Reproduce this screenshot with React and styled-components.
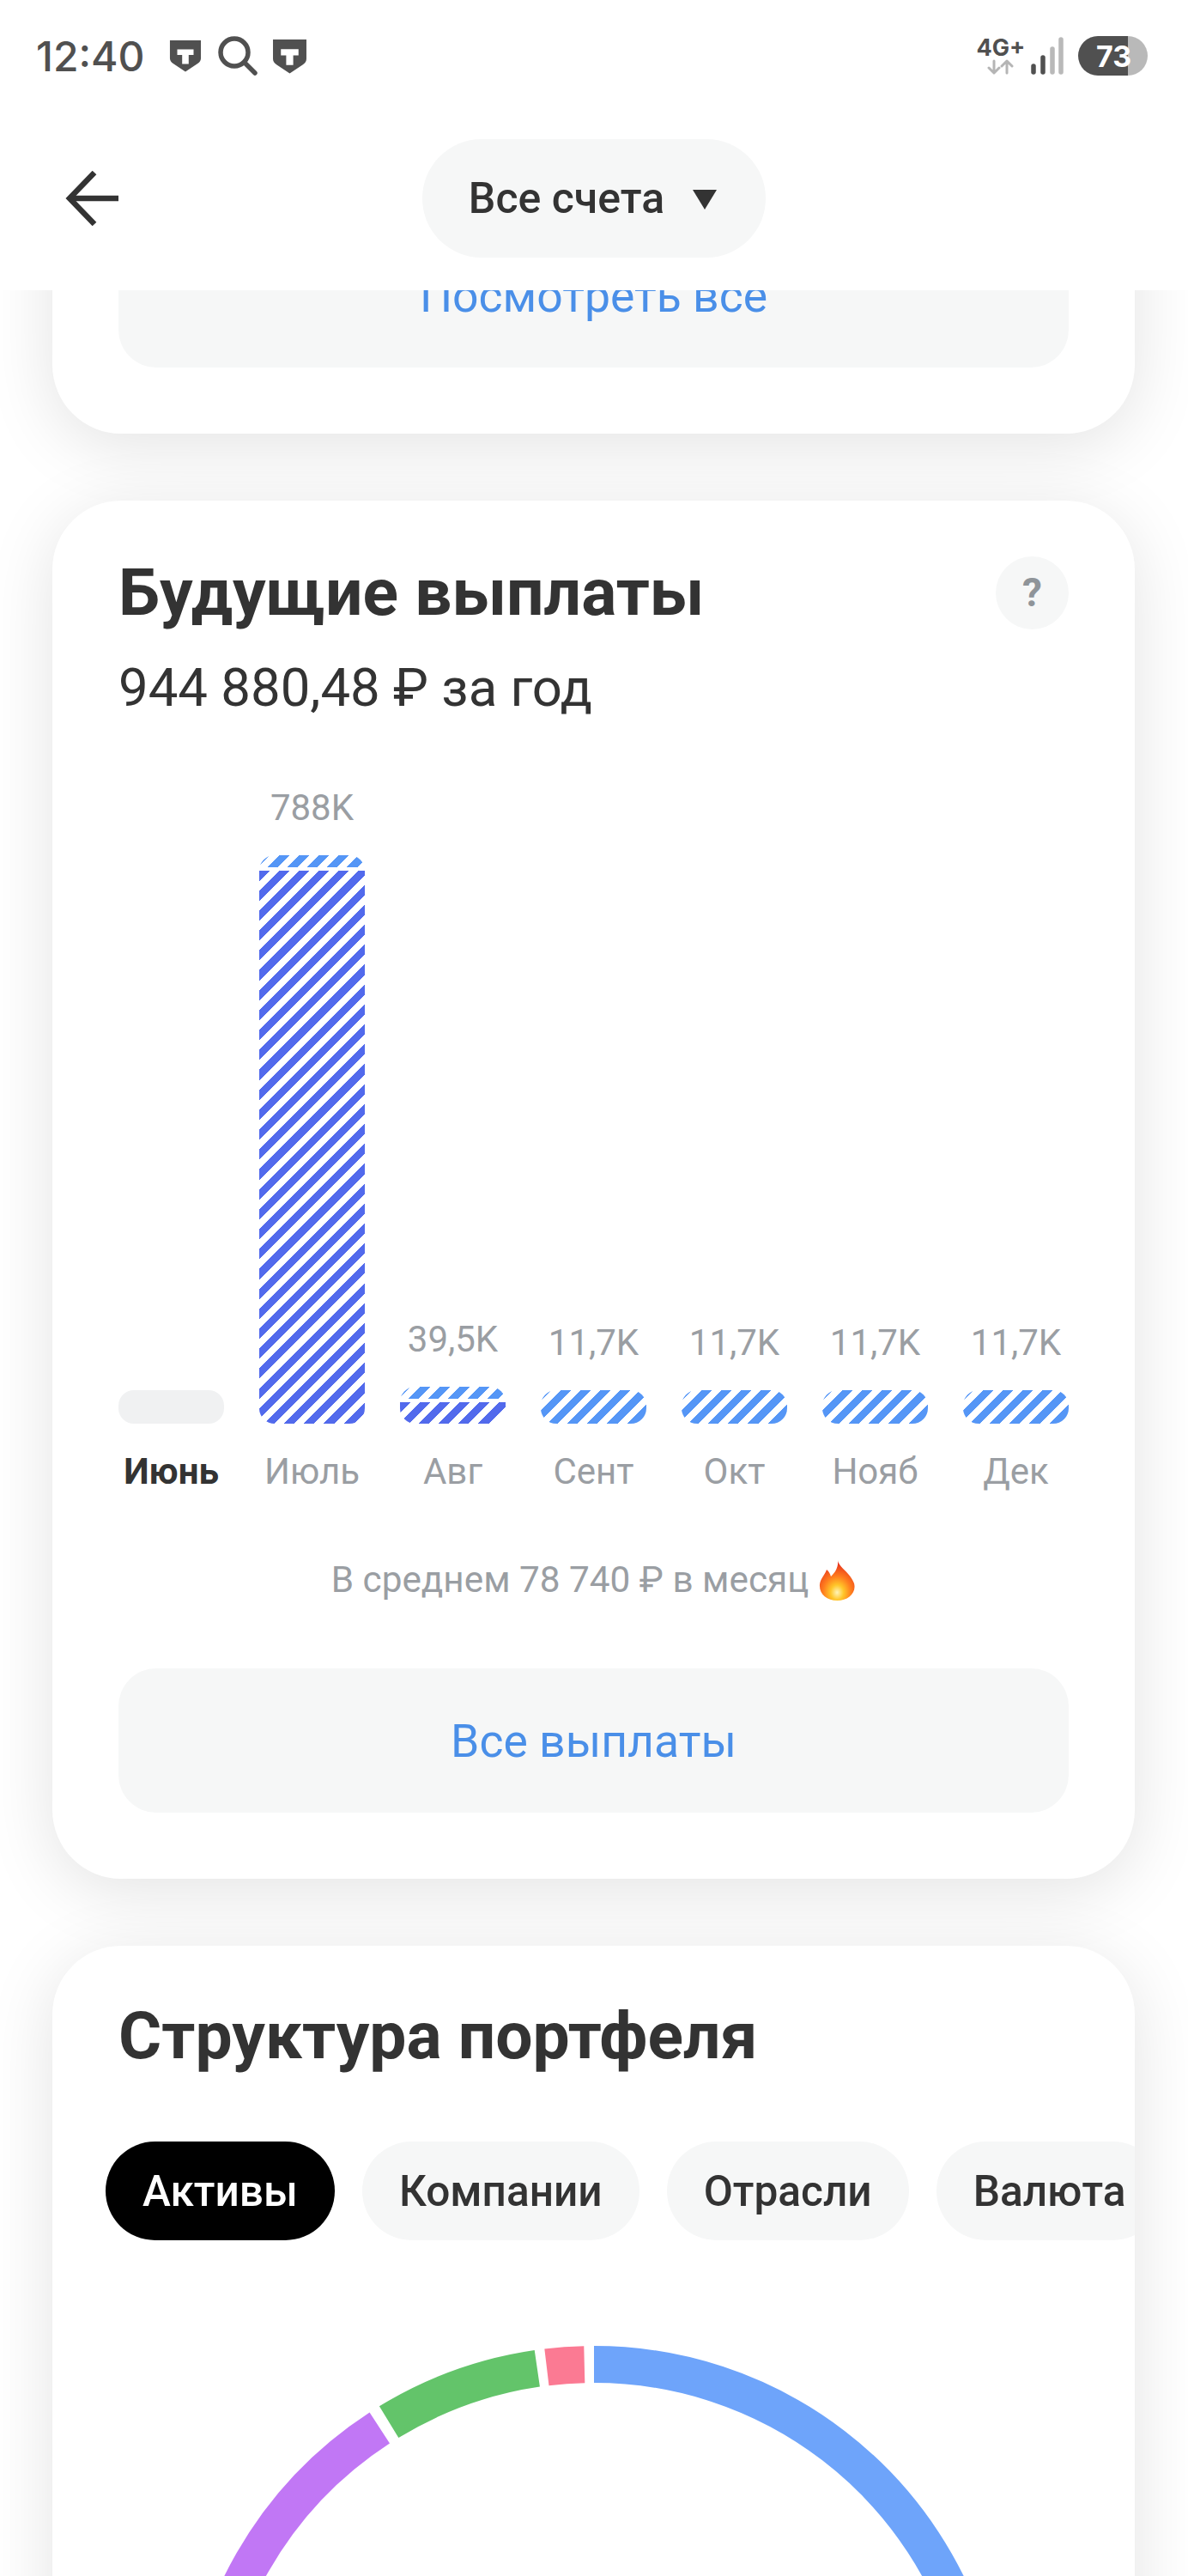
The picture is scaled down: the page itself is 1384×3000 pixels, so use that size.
import React from "react";
import styled, { createGlobalStyle } from "styled-components";

const GlobalStyle = createGlobalStyle`
  html, body {
    margin: 0;
    padding: 0;
    height: 3000px;
    overflow: hidden;
    background: #fff;
  }
  * { box-sizing: border-box; }
`;

const Screen = styled.div`
  width: 1384px;
  height: 3000px;
  display: flex;
  flex-direction: column;
  overflow: hidden;
  font-family: Roboto, "Noto Sans", sans-serif;
  color: #333;
  background: #fff;
`;

const Header = styled.header`
  flex: none;
  height: 338px;
  background: #fff;
  position: relative;
  z-index: 2;
`;

const StatusBar = styled.div`
  height: 130px;
  padding: 0 47px 0 42px;
  display: flex;
  align-items: center;
  justify-content: space-between;
  color: #505050;
`;

const StatusGroup = styled.div`
  display: flex;
  align-items: center;
`;

const Clock = styled.span`
  font-family: Inter, Roboto, sans-serif;
  font-size: 48px;
  font-weight: 500;
  margin-right: 28px;
`;

const NetType = styled.div`
  width: 52px;
  margin-right: 8px;
  display: flex;
  flex-direction: column;
  align-items: center;
  font-family: Inter, sans-serif;
  font-size: 27px;
  line-height: 26px;
  font-weight: 700;
  white-space: nowrap;
`;

const Battery = styled.div`
  width: 81px;
  height: 46px;
  margin-left: 16px;
  border-radius: 23px;
  background: linear-gradient(90deg, #505050 72%, #b9b9b9 72%);
  color: #fff;
  font-family: Inter, sans-serif;
  font-size: 34px;
  font-weight: 700;
  display: flex;
  align-items: center;
  justify-content: center;
  padding-left: 2px;
`;

const NavBar = styled.div`
  height: 140px;
  margin-top: 31px;
  padding: 0 70px 0 76px;
  display: grid;
  grid-template-columns: 416px 400px 1fr;
  align-items: center;
`;

const BackButton = styled.button`
  border: 0;
  padding: 0;
  background: none;
  width: 80px;
  height: 80px;
  display: flex;
  align-items: center;
`;

const AccountPill = styled.div`
  height: 138px;
  border-radius: 69px;
  background: #f6f7f7;
  display: flex;
  align-items: center;
  justify-content: center;
  gap: 33px;
  padding-right: 3px;
  font-size: 50px;
  font-weight: 500;
  color: #333;
`;

const Caret = styled.span`
  width: 0;
  height: 0;
  border-left: 14px solid transparent;
  border-right: 14px solid transparent;
  border-top: 23px solid #333;
  margin-top: 2px;
`;

const Feed = styled.main`
  flex: 1;
  min-height: 0;
  overflow: hidden;
`;

const FeedInner = styled.div`
  margin-top: -155px;
  padding: 0 62px 0 61px;
  display: flex;
  flex-direction: column;
  gap: 78px;
`;

const Card = styled.section`
  background: #fff;
  border-radius: 80px;
  padding: ${(p) => p.$pad || "77px"};
  box-shadow: 0 14px 80px rgba(0, 0, 0, 0.115);
  overflow: hidden;
`;

const WideButton = styled.button`
  display: block;
  width: 100%;
  height: 168px;
  border: 0;
  border-radius: 44px;
  background: #f6f7f7;
  color: #4a8fe8;
  font-family: inherit;
  font-size: 53.5px;
  font-weight: 400;
`;

const CardHead = styled.div`
  display: flex;
  align-items: center;
  justify-content: space-between;
  height: 84px;
`;

const Title = styled.h2`
  margin: 0;
  font-size: 76.8px;
  line-height: 84px;
  font-weight: 700;
  color: #333;
`;

const HelpButton = styled.div`
  width: 85px;
  height: 85px;
  border-radius: 50%;
  background: #f6f7f7;
  color: #8f9499;
  font-size: 46px;
  font-weight: 700;
  display: flex;
  align-items: center;
  justify-content: center;
`;

const Subtitle = styled.div`
  margin-top: 34px;
  font-size: 61.7px;
  line-height: 70px;
  color: #333;
`;

const Chart = styled.div`
  margin-top: 30px;
  height: 792px;
  display: grid;
  grid-template-columns: repeat(7, 1fr);
  column-gap: 41px;
`;

const LabelRow = styled.div`
  display: grid;
  grid-template-columns: repeat(7, 1fr);
  column-gap: 41px;
`;

const Column = styled.div`
  display: flex;
  flex-direction: column;
  align-items: center;
  justify-content: flex-end;
`;

const BarValue = styled.div`
  font-size: 42px;
  line-height: 50px;
  color: #9a9ea3;
  margin-bottom: 30px;
  white-space: nowrap;
`;

const Bar = styled.div`
  width: 100%;
  flex: none;
  border-radius: 18px;
  overflow: hidden;
  display: flex;
  flex-direction: column;
  gap: 4px;
  background: ${(p) => (p.$empty ? "#f0f1f2" : "#fff")};
`;

const Stripes = styled.div`
  flex: none;
  background: repeating-linear-gradient(
    135deg,
    ${(p) => p.$color} 0,
    ${(p) => p.$color} 8.6px,
    #fff 8.6px,
    #fff 16.4px
  );
`;

const MonthLabel = styled.div`
  margin-top: 31px;
  height: 50px;
  font-size: 42px;
  line-height: 50px;
  text-align: center;
  font-weight: ${(p) => (p.$current ? 700 : 400)};
  color: ${(p) => (p.$current ? "#333" : "#9a9ea3")};
`;

const AverageNote = styled.div`
  margin-top: 76px;
  display: flex;
  align-items: center;
  justify-content: center;
  gap: 12px;
  font-size: 42.3px;
  line-height: 50px;
  color: #9a9ea3;
`;

const ButtonSlot = styled.div`
  margin-top: 78px;
`;

const TabsRow = styled.div`
  margin: 81px -77px 0 -15px;
  display: flex;
  gap: 32px;
  overflow: hidden;
`;

const Tab = styled.div`
  flex: none;
  height: 115px;
  padding: 0 43px;
  border-radius: 58px;
  display: flex;
  align-items: center;
  font-size: 49.6px;
  font-weight: 500;
  background: ${(p) => (p.$active ? "#000" : "#f6f7f7")};
  color: ${(p) => (p.$active ? "#fff" : "#333")};
`;

const Donut = styled.svg`
  display: block;
  width: 960px;
  height: 960px;
  margin: 123px auto 0;
`;

const months = [
  { name: "Июнь", current: true, empty: 39 },
  { name: "Июль", value: "788K", light: 14, dark: 644 },
  { name: "Авг", value: "39,5K", light: 14, dark: 25 },
  { name: "Сент", value: "11,7K", light: 39 },
  { name: "Окт", value: "11,7K", light: 39 },
  { name: "Нояб", value: "11,7K", light: 39 },
  { name: "Дек", value: "11,7K", light: 39 },
];

const tabs = ["Активы", "Компании", "Отрасли", "Валюта"];

// ring slices, angles in degrees clockwise from the top
const slices = [
  { color: "#6ea4fa", from: 0, to: 150 },
  { color: "#c177f5", from: 210, to: 327 },
  { color: "#63c46a", from: 328.6, to: 351.7 },
  { color: "#fb7a93", from: 353.1, to: 358.6 },
];

const ringPath = (from, to, r = 458.5) => {
  const point = (deg) => {
    const a = (deg * Math.PI) / 180;
    return `${480 + r * Math.sin(a)} ${480 - r * Math.cos(a)}`;
  };
  return `M${point(from)} A${r} ${r} 0 ${to - from > 180 ? 1 : 0} 1 ${point(to)}`;
};

const ShieldIcon = ({ width, height, mr }) => (
  <svg width={width} height={height} viewBox="0 0 40 40" style={{ marginRight: mr }}>
    <path d="M1 1H39V23Q39 27 35 29.5L20 39.5L5 29.5Q1 27 1 23Z" fill="#505050" />
    <path d="M10 12H30V19H24V30H16V19H10Z" fill="#fff" />
  </svg>
);

const SearchIcon = () => (
  <svg width="46" height="46" viewBox="0 0 46 46" style={{ marginRight: 17 }} fill="none" stroke="#505050" strokeWidth="5.5" strokeLinecap="round">
    <circle cx="19" cy="19" r="16" />
    <path d="M31 31L43 43" />
  </svg>
);

const NetArrows = () => (
  <svg width="32" height="18" viewBox="0 0 32 18" fill="none" stroke="#b5b5b5" strokeWidth="3" strokeLinecap="round" strokeLinejoin="round">
    <path d="M8 2V16M2 10L8 16L14 10" />
    <path d="M23 16V2M17 8L23 2L29 8" />
  </svg>
);

const SignalIcon = () => (
  <svg width="40" height="44" viewBox="0 0 40 44" fill="none" strokeWidth="5.5" strokeLinecap="round">
    <path d="M4 34V41" stroke="#505050" />
    <path d="M15 24V41" stroke="#505050" />
    <path d="M26 14V41" stroke="#b9b9b9" />
    <path d="M36 3V41" stroke="#b9b9b9" />
  </svg>
);

const BackIcon = () => (
  <svg width="62" height="64" viewBox="0 0 62 64" fill="none" stroke="#333" strokeWidth="6.5">
    <path d="M62 32H5" />
    <path d="M34 2L5 32L34 62" />
  </svg>
);

const FlameIcon = () => (
  <svg width="43" height="47" viewBox="0 0 43 47">
    <defs>
      <radialGradient id="flameFill" cx="0.5" cy="0.8" r="0.72">
        <stop offset="0" stopColor="#fff4b8" />
        <stop offset="0.26" stopColor="#ffc629" />
        <stop offset="0.55" stopColor="#ff7f1e" />
        <stop offset="1" stopColor="#e8321c" />
      </radialGradient>
    </defs>
    <path d="M22 0C23 8 37 15 41 27C44 38 34 47 21.5 47C9 47 0 39 1 28C2 21 7 17 9 11C12 13 13 16 14 19C19 14 23 8 22 0Z" fill="url(#flameFill)" />
  </svg>
);

const ChartColumn = ({ month }) => (
  <Column>
    {month.value && <BarValue>{month.value}</BarValue>}
    <Bar $empty={month.empty} style={month.empty ? { height: month.empty } : undefined}>
      {month.light && <Stripes $color="#5596f6" style={{ height: month.light }} />}
      {month.dark && <Stripes $color="#526aec" style={{ height: month.dark }} />}
    </Bar>
  </Column>
);

export default function App() {
  return (
    <Screen>
      <GlobalStyle />
      <Header>
        <StatusBar>
          <StatusGroup>
            <Clock>12:40</Clock>
            <ShieldIcon width={38} height={38} mr={19} />
            <SearchIcon />
            <ShieldIcon width={41} height={41} mr={0} />
          </StatusGroup>
          <StatusGroup>
            <NetType>
              4G+
              <NetArrows />
            </NetType>
            <SignalIcon />
            <Battery>73</Battery>
          </StatusGroup>
        </StatusBar>
        <NavBar>
          <BackButton>
            <BackIcon />
          </BackButton>
          <AccountPill>
            Все счета
            <Caret />
          </AccountPill>
        </NavBar>
      </Header>
      <Feed>
        <FeedInner>
          <Card>
            <WideButton>Посмотреть все</WideButton>
          </Card>
          <Card $pad="65px 77px 77px">
            <CardHead>
              <Title>Будущие выплаты</Title>
              <HelpButton>?</HelpButton>
            </CardHead>
            <Subtitle>944 880,48 ₽ за год</Subtitle>
            <Chart>
              {months.map((m) => (
                <ChartColumn key={m.name} month={m} />
              ))}
            </Chart>
            <LabelRow>
              {months.map((m) => (
                <MonthLabel key={m.name} $current={m.current}>
                  {m.name}
                </MonthLabel>
              ))}
            </LabelRow>
            <AverageNote>
              В среднем 78 740 ₽ в месяц
              <FlameIcon />
            </AverageNote>
            <ButtonSlot>
              <WideButton>Все выплаты</WideButton>
            </ButtonSlot>
          </Card>
          <Card $pad="63px 77px 77px">
            <Title>Структура портфеля</Title>
            <TabsRow>
              {tabs.map((t, i) => (
                <Tab key={t} $active={i === 0}>
                  {t}
                </Tab>
              ))}
            </TabsRow>
            <Donut viewBox="0 0 960 960">
              {slices.map((s) => (
                <path key={s.color} d={ringPath(s.from, s.to)} fill="none" stroke={s.color} strokeWidth="43" />
              ))}
            </Donut>
          </Card>
        </FeedInner>
      </Feed>
    </Screen>
  );
}
